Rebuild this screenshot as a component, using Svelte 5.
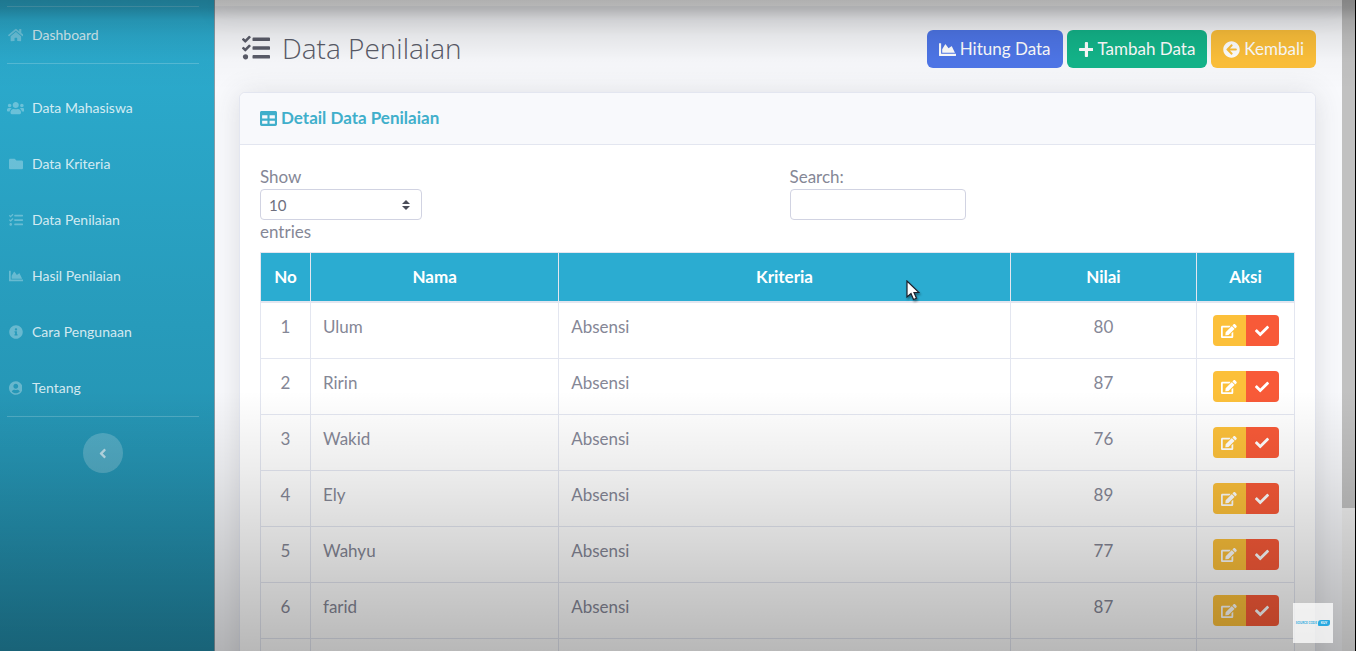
<script>
  const icons = {
    home: ['0 0 576 512', 'M280.37 148.26L96 300.11V464a16 16 0 0 0 16 16l112.06-.29a16 16 0 0 0 15.92-16V368a16 16 0 0 1 16-16h64a16 16 0 0 1 16 16v95.64a16 16 0 0 0 16 16.05L464 480a16 16 0 0 0 16-16V300L295.67 148.26a12.19 12.19 0 0 0-15.3 0zM571.6 251.47L488 182.56V44.05a12 12 0 0 0-12-12h-56a12 12 0 0 0-12 12v72.61L318.47 43a48 48 0 0 0-61 0L4.34 251.47a12 12 0 0 0-1.6 16.9l25.5 31A12 12 0 0 0 45.15 301l235.22-193.74a12.19 12.19 0 0 1 15.3 0L530.9 301a12 12 0 0 0 16.9-1.6l25.5-31a12 12 0 0 0-1.7-16.93z'],
    users: ['0 0 640 512', 'M96 224c35.300 0 64-28.700 64-64s-28.700-64-64-64-64 28.700-64 64 28.700 64 64 64zm448 0c35.300 0 64-28.700 64-64s-28.700-64-64-64-64 28.700-64 64 28.700 64 64 64zm32 32h-64c-17.600 0-33.500 7.100-45.100 18.600 40.300 22.100 68.900 62 75.100 109.400h66c17.700 0 32-14.300 32-32v-32c0-35.300-28.700-64-64-64zm-256 0c61.900 0 112-50.100 112-112S381.900 32 320 32 208 82.100 208 144s50.100 112 112 112zm76.800 32h-8.300c-20.800 10-43.900 16-68.500 16s-47.600-6-68.500-16h-8.300C179.600 288 128 339.600 128 403.200V432c0 26.500 21.500 48 48 48h288c26.500 0 48-21.500 48-48v-28.800c0-63.600-51.600-115.200-115.200-115.200zm-223.700-13.400C161.500 263.100 145.600 256 128 256H64c-35.300 0-64 28.700-64 64v32c0 17.700 14.300 32 32 32h65.900c6.300-47.400 34.900-87.300 75.200-109.400z'],
    folder: ['0 0 512 512', 'M464 128H272l-64-64H48C21.490 64 0 85.490 0 112v288c0 26.510 21.490 48 48 48h416c26.510 0 48-21.490 48-48V176c0-26.510-21.490-48-48-48z'],
    tasks: ['0 0 512 512', 'M139.610 35.500a12 12 0 0 0-17 0L58.930 98.810l-22.700-22.120a12 12 0 0 0-17 0L3.530 92.410a12 12 0 0 0 0 17l47.590 47.400a12.780 12.780 0 0 0 17.610 0l15.590-15.620L156.520 69a12.090 12.090 0 0 0 .090-17zm0 159.190a12 12 0 0 0-17 0l-63.680 63.720-22.700-22.100a12 12 0 0 0-17 0L3.530 252a12 12 0 0 0 0 17L51 316.500a12.770 12.770 0 0 0 17.600 0l15.700-15.690 72.200-72.220a12 12 0 0 0 .090-16.900zM64 368c-26.490 0-48.590 21.500-48.590 48S37.530 464 64 464a48 48 0 0 0 0-96zm432 16H208a16 16 0 0 0-16 16v32a16 16 0 0 0 16 16h288a16 16 0 0 0 16-16v-32a16 16 0 0 0-16-16zm0-320H208a16 16 0 0 0-16 16v32a16 16 0 0 0 16 16h288a16 16 0 0 0 16-16V80a16 16 0 0 0-16-16zm0 160H208a16 16 0 0 0-16 16v32a16 16 0 0 0 16 16h288a16 16 0 0 0 16-16v-32a16 16 0 0 0-16-16z'],
    chart: ['0 0 512 512', 'M500 384c6.600 0 12 5.400 12 12v40c0 6.600-5.400 12-12 12H12c-6.600 0-12-5.400-12-12V76c0-6.600 5.400-12 12-12h40c6.600 0 12 5.400 12 12v308h436zM372.700 159.500L288 216l-85.300-113.700c-5.100-6.800-15.500-6.300-19.900 1L96 248v104h384l-89.900-187.800c-3.200-6.500-11.400-8.700-17.400-4.700z'],
    info: ['0 0 512 512', 'M256 8C119.043 8 8 119.083 8 256c0 136.997 111.043 248 248 248s248-111.003 248-248C504 119.083 392.957 8 256 8zm0 110c23.196 0 42 18.804 42 42s-18.804 42-42 42-42-18.804-42-42 18.804-42 42-42zm56 254c0 6.627-5.373 12-12 12h-88c-6.627 0-12-5.373-12-12v-24c0-6.627 5.373-12 12-12h12v-64h-12c-6.627 0-12-5.373-12-12v-24c0-6.627 5.373-12 12-12h64c6.627 0 12 5.373 12 12v100h12c6.627 0 12 5.373 12 12v24z'],
    user: ['0 0 496 512', 'M248 8C111 8 0 119 0 256s111 248 248 248 248-111 248-248S385 8 248 8zm0 96c48.600 0 88 39.400 88 88s-39.400 88-88 88-88-39.400-88-88 39.400-88 88-88zm0 344c-58.700 0-111.300-26.600-146.500-68.200 18.800-35.400 55.600-59.800 98.500-59.800 2.400 0 4.800.4 7.100 1.100 13 4.200 26.600 6.900 40.900 6.900 14.300 0 28-2.700 40.900-6.900 2.300-.7 4.700-1.100 7.100-1.100 42.900 0 79.700 24.400 98.500 59.800C359.300 421.400 306.700 448 248 448z'],
    left: ['0 0 256 512', 'M31.700 239l136-136c9.400-9.400 24.600-9.400 33.900 0l22.600 22.600c9.400 9.400 9.400 24.600 0 33.900L127.900 256l96.400 96.400c9.400 9.400 9.400 24.600 0 33.900L201.700 409c-9.400 9.400-24.600 9.400-33.900 0l-136-136c-9.500-9.400-9.500-24.600-.1-34z'],
    plus: ['0 0 448 512', 'M416 208H272V64c0-17.670-14.330-32-32-32h-32c-17.670 0-32 14.330-32 32v144H32c-17.670 0-32 14.330-32 32v32c0 17.670 14.330 32 32 32h144v144c0 17.670 14.330 32 32 32h32c17.670 0 32-14.330 32-32V304h144c17.670 0 32-14.330 32-32v-32c0-17.670-14.330-32-32-32z'],
    back: ['0 0 512 512', 'M256 504C119 504 8 393 8 256S119 8 256 8s248 111 248 248-111 248-248 248zm28.900-143.600L209.400 288H392c13.300 0 24-10.700 24-24v-16c0-13.300-10.700-24-24-24H209.400l75.500-72.400c9.700-9.300 9.900-24.800.4-34.300l-11-10.900c-9.400-9.400-24.600-9.400-33.900 0L107.700 239c-9.400 9.400-9.400 24.600 0 33.900l132.700 132.700c9.400 9.400 24.600 9.400 33.900 0l11-10.900c9.500-9.500 9.300-25-.4-34.300z'],
    table: ['0 0 512 512', 'M464 32H48C21.490 32 0 53.490 0 80v352c0 26.510 21.490 48 48 48h416c26.510 0 48-21.490 48-48V80c0-26.510-21.490-48-48-48zM224 416H64v-96h160v96zm0-160H64v-96h160v96zm224 160H288v-96h160v96zm0-160H288v-96h160v96z'],
    edit: ['0 0 576 512', 'M402.600 83.200l90.200 90.200c3.800 3.800 3.800 10 0 13.800L274.400 405.600l-92.800 10.300c-12.400 1.400-22.900-9.100-21.500-21.500l10.300-92.800L388.800 83.200c3.800-3.800 10-3.800 13.800 0zm162-22.900l-48.800-48.800c-15.200-15.200-39.900-15.200-55.200 0l-35.400 35.400c-3.800 3.800-3.800 10 0 13.800l90.200 90.200c3.800 3.800 10 3.800 13.800 0l35.400-35.400c15.200-15.300 15.200-40 0-55.200zM384 346.200V448H64V128h229.800c3.200 0 6.200-1.300 8.500-3.500l40-40c7.600-7.600 2.200-20.500-8.500-20.500H48C21.500 64 0 85.500 0 112v352c0 26.500 21.500 48 48 48h352c26.500 0 48-21.500 48-48V306.200c0-10.700-12.900-16-20.500-8.500l-40 40c-2.200 2.300-3.500 5.300-3.500 8.500z'],
    check: ['0 0 512 512', 'M173.898 439.404l-166.400-166.400c-9.997-9.997-9.997-26.206 0-36.204l36.203-36.204c9.997-9.998 26.207-9.998 36.204 0L192 312.690 432.095 72.596c9.997-9.997 26.207-9.997 36.204 0l36.203 36.204c9.997 9.997 9.997 26.206 0 36.204l-294.400 294.401c-9.998 9.997-26.207 9.997-36.204-.001z']
  };

  const menu = [
    { icon: 'users', label: 'Data Mahasiswa' },
    { icon: 'folder', label: 'Data Kriteria' },
    { icon: 'tasks', label: 'Data Penilaian' },
    { icon: 'chart', label: 'Hasil Penilaian' },
    { icon: 'info', label: 'Cara Pengunaan' },
    { icon: 'user', label: 'Tentang' }
  ];

  const actions = [
    { icon: 'chart', label: 'Hitung Data', tone: 'primary' },
    { icon: 'plus', label: 'Tambah Data', tone: 'success' },
    { icon: 'back', label: 'Kembali', tone: 'warning' }
  ];

  const rows = [
    { no: 1, nama: 'Ulum', kriteria: 'Absensi', nilai: 80 },
    { no: 2, nama: 'Ririn', kriteria: 'Absensi', nilai: 87 },
    { no: 3, nama: 'Wakid', kriteria: 'Absensi', nilai: 76 },
    { no: 4, nama: 'Ely', kriteria: 'Absensi', nilai: 89 },
    { no: 5, nama: 'Wahyu', kriteria: 'Absensi', nilai: 77 },
    { no: 6, nama: 'farid', kriteria: 'Absensi', nilai: 87 },
    { no: '', nama: '', kriteria: '', nilai: '' }
  ];

  let size = $state('10');
  let search = $state('');
</script>

{#snippet icon(name)}
  <svg class="icon" viewBox={icons[name][0]} aria-hidden="true"><path d={icons[name][1]} /></svg>
{/snippet}

<div class="page">
  <nav class="sidebar">
    <hr />
    <a class="item" href="#dashboard"><span class="glyph">{@render icon('home')}</span>Dashboard</a>
    <hr class="spaced" />
    {#each menu as m}
      <a class="item" href="#{m.icon}"><span class="glyph">{@render icon(m.icon)}</span>{m.label}</a>
    {/each}
    <hr class="spaced" />
    <button class="collapse" type="button" aria-label="Toggle sidebar">{@render icon('left')}</button>
  </nav>

  <div class="content">
    <div class="topbar"></div>
    <main>
      <header class="heading">
        <h1>{@render icon('tasks')}Data Penilaian</h1>
        <div class="actions">
          {#each actions as a}
            <button class="btn {a.tone}" type="button">{@render icon(a.icon)}{a.label}</button>
          {/each}
        </div>
      </header>

      <section class="card">
        <h2>{@render icon('table')}Detail Data Penilaian</h2>
        <div class="body">
          <div class="filters">
            <label class="length">
              Show
              <span class="select">
                <select bind:value={size}>
                  <option>10</option><option>25</option><option>50</option><option>100</option>
                </select>
                <svg viewBox="0 0 8 10" aria-hidden="true"><path d="M4 0L0 4h8zM0 6h8l-4 4z" /></svg>
              </span>
              entries
            </label>
            <label class="search">
              Search:
              <input type="search" bind:value={search} />
            </label>
          </div>

          <table>
            <colgroup>
              <col class="c-no" /><col class="c-nama" /><col /><col class="c-nilai" /><col class="c-aksi" />
            </colgroup>
            <thead>
              <tr><th>No</th><th>Nama</th><th>Kriteria</th><th>Nilai</th><th>Aksi</th></tr>
            </thead>
            <tbody>
              {#each rows as r}
                <tr>
                  <td class="center">{r.no}</td>
                  <td>{r.nama}</td>
                  <td>{r.kriteria}</td>
                  <td class="center">{r.nilai}</td>
                  <td class="center">
                    <div class="group">
                      <button class="edit" type="button" aria-label="Edit">{@render icon('edit')}</button>
                      <button class="pick" type="button" aria-label="Check">{@render icon('check')}</button>
                    </div>
                  </td>
                </tr>
              {/each}
            </tbody>
          </table>
        </div>
      </section>
    </main>
  </div>

  <div class="scrollbar"><div class="thumb"></div></div>

  <div class="shade"></div>

  <svg class="cursor" viewBox="0 0 14 21" aria-hidden="true">
    <path d="M1 1v16l4-3.500 2.500 6 3-1.300-2.500-5.700h5z" fill="#fff" stroke="#1c1f2b" stroke-width="1.200" />
  </svg>

  <div class="watermark">
    <span>SOURCE CODE</span><b>KUY</b>
  </div>
</div>

<style>
  :global(body) {
    margin: 0;
    overflow: hidden;
  }
  .page {
    position: relative;
    display: flex;
    height: 100vh;
    overflow: hidden;
    background: #f8f9fc;
    color: #858796;
    font: 400 17px/24px Lato, 'Open Sans', sans-serif;
  }
  .icon {
    height: 1em;
    fill: currentColor;
    flex: none;
  }
  button, select, input {
    font: inherit;
    margin: 0;
    box-sizing: border-box;
  }
  button {
    border: 0;
    cursor: pointer;
  }

  .sidebar {
    flex: none;
    width: 192px;
    padding: 6px 15px 0 7px;
    border-right: 1px solid #8a9ea8;
    background: linear-gradient(#2cadd0, #2289a6);
    text-align: center;
  }
  hr {
    height: 1px;
    margin: 0;
    border: 0;
    background: rgba(255, 255, 255, 0.2);
  }
  hr.spaced {
    margin-bottom: 16px;
  }
  .item {
    display: flex;
    align-items: center;
    gap: 8px;
    height: 56px;
    color: rgba(255, 255, 255, 0.8);
    font-size: 14px;
    text-decoration: none;
  }
  .glyph {
    display: flex;
    justify-content: center;
    width: 17px;
    color: rgba(255, 255, 255, 0.3);
  }
  .collapse {
    width: 40px;
    height: 40px;
    padding: 0;
    border-radius: 50%;
    background: rgba(255, 255, 255, 0.2);
    color: rgba(255, 255, 255, 0.6);
    font-size: 15px;
    line-height: 0;
  }

  .content {
    flex: 1;
    min-width: 0;
  }
  .topbar {
    height: 6px;
    background: #fff;
    box-shadow: 0 2px 28px rgba(58, 59, 69, 0.15);
  }
  main {
    padding: 24px 26px 24px 24px;
  }
  .heading {
    display: flex;
    align-items: center;
    justify-content: space-between;
    margin-bottom: 24px;
  }
  h1 {
    display: flex;
    align-items: center;
    gap: 12px;
    margin: 0 0 2px 3px;
    color: #5a5c69;
    font: 300 28px/36px 'Open Sans', sans-serif;
  }
  .actions {
    display: flex;
    gap: 4px;
  }
  .btn {
    display: flex;
    align-items: center;
    gap: 4px;
    height: 38px;
    padding: 0 12px;
    border-radius: 6px;
    color: #fff;
  }
  .primary { background: #4e76e8; }
  .success { background: #13b58a; }
  .warning { background: #fdc03a; }

  .card {
    border: 1px solid #e3e6f0;
    border-radius: 6px;
    background: #fff;
    box-shadow: 0 2px 28px rgba(58, 59, 69, 0.15);
  }
  h2 {
    display: flex;
    align-items: center;
    gap: 4px;
    margin: 0;
    padding: 13px 20px 14px;
    border-bottom: 1px solid #e3e6f0;
    border-radius: 6px 6px 0 0;
    background: #f8f9fc;
    color: #40afcb;
    font-size: 17px;
    line-height: 24px;
  }
  .body {
    padding: 20px;
  }
  .filters {
    display: grid;
    grid-template-columns: 1fr 1fr;
    gap: 24px;
    margin-bottom: 8px;
  }
  .length, .search {
    display: flex;
    flex-direction: column;
    align-items: flex-start;
  }
  .select {
    position: relative;
  }
  .select svg {
    position: absolute;
    top: 11px;
    right: 12px;
    width: 8px;
    fill: #4a4c58;
  }
  select, input {
    display: block;
    width: 162px;
    height: 31px;
    padding: 0 8px;
    border: 1px solid #d1d3e2;
    border-radius: 4px;
    background: #fff;
    color: #6e707e;
    font-size: 15px;
    appearance: none;
  }
  input {
    width: 176px;
  }

  table {
    width: 100%;
    table-layout: fixed;
    border-collapse: collapse;
  }
  .c-no { width: 50px; }
  .c-nama { width: 24%; }
  .c-nilai { width: 18%; }
  .c-aksi { width: 98px; }
  th, td {
    padding: 12px;
    border: 1px solid #e3e6f0;
    text-align: left;
    vertical-align: top;
  }
  th {
    border-bottom-width: 2px;
    background: #2bacd1;
    color: #fff;
    text-align: center;
  }
  .center {
    text-align: center;
  }
  .group {
    display: inline-flex;
    vertical-align: top;
    border-radius: 4px;
    overflow: hidden;
  }
  .group button {
    display: flex;
    align-items: center;
    justify-content: center;
    width: 33px;
    height: 31px;
    padding: 0;
    color: #fff;
    font-size: 14px;
  }
  .group .edit { background: #fcc03a; }
  .group .pick { background: #f85a38; }

  .scrollbar {
    flex: none;
    width: 13px;
    border-right: 1px solid #000;
    background: #f1f1f1;
  }
  .thumb {
    height: 78%;
    background: #c1c1c1;
  }

  .shade {
    position: absolute;
    inset: 0;
    pointer-events: none;
    background:
      linear-gradient(rgba(0, 0, 0, 0.31), rgba(0, 0, 0, 0.28) 8px, rgba(0, 0, 0, 0.15) 20px, rgba(0, 0, 0, 0.08) 36px, rgba(0, 0, 0, 0.02) 60px, transparent 90px),
      linear-gradient(transparent 60%, rgba(0, 0, 0, 0.07) 72%, rgba(0, 0, 0, 0.28));
  }
  .cursor {
    position: absolute;
    left: 906px;
    top: 280px;
    width: 14px;
    filter: drop-shadow(1px 2px 1px rgba(0, 0, 0, 0.4));
  }
  .watermark {
    position: absolute;
    right: 23px;
    bottom: 8px;
    display: flex;
    align-items: center;
    justify-content: center;
    gap: 1px;
    width: 40px;
    height: 40px;
    background: rgba(255, 255, 255, 0.75);
    color: #35aee0;
    font: 900 3px/6px Lato, sans-serif;
    white-space: nowrap;
  }
  .watermark b {
    padding: 0 3px;
    border-radius: 3px 1px;
    background: #2aa9e0;
    color: #fff;
  }
</style>
